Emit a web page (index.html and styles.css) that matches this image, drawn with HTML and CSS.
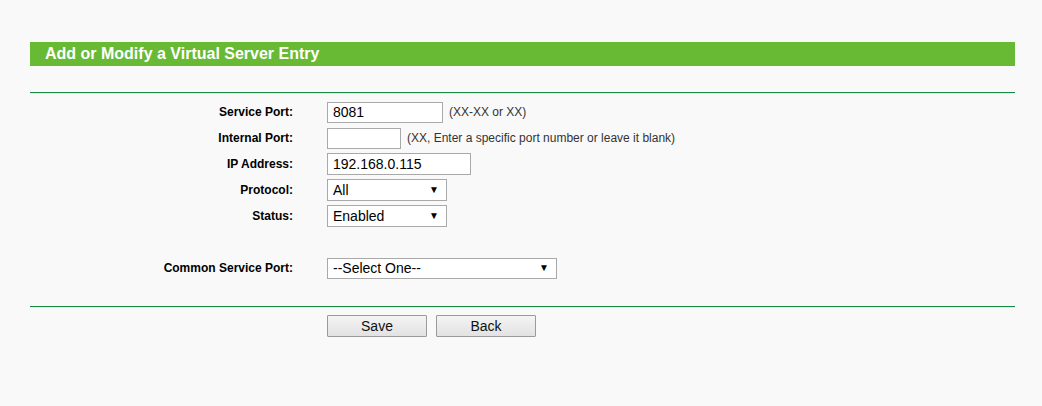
FILE: index.html
```html
<!DOCTYPE html>
<html lang="en">
<head>
  <meta charset="UTF-8">
  <title>Virtual Servers</title>
  <link rel="stylesheet" href="styles.css">
</head>
<body>

  <div class="page">
    <div class="title-bar">Add or Modify a Virtual Server Entry</div>
    <div class="rule"></div>

    <div class="form-grid">
      <label for="ex-port">Service Port:</label>
      <div class="field">
        <input type="text" id="ex-port" class="w-port" value="8081">
        <span class="hint">(XX-XX or XX)</span>
      </div>

      <label for="in-port">Internal Port:</label>
      <div class="field">
        <input type="text" id="in-port" class="w-short">
        <span class="hint">(XX, Enter a specific port number or leave it blank)</span>
      </div>

      <label for="ip">IP Address:</label>
      <div class="field">
        <input type="text" id="ip" class="w-ip tall" value="192.168.0.115">
      </div>

      <label for="protocol">Protocol:</label>
      <div class="field">
        <div class="select-box w-select">
          <select id="protocol">
            <option>All</option>
            <option>TCP</option>
            <option>UDP</option>
          </select>
          <span class="arrow">&#9660;</span>
        </div>
      </div>

      <label for="status">Status:</label>
      <div class="field">
        <div class="select-box w-select">
          <select id="status">
            <option>Enabled</option>
            <option>Disabled</option>
          </select>
          <span class="arrow">&#9660;</span>
        </div>
      </div>

      <div class="spacer"></div>

      <label for="common">Common Service Port:</label>
      <div class="field">
        <div class="select-box w-common short">
          <select id="common">
            <option>--Select One--</option>
            <option>DNS</option>
            <option>FTP</option>
            <option>HTTP</option>
          </select>
          <span class="arrow">&#9660;</span>
        </div>
      </div>
    </div>

    <div class="rule bottom"></div>

    <div class="actions">
      <button type="button">Save</button>
      <button type="button">Back</button>
    </div>
  </div>

</body>
</html>
```

FILE: styles.css
```css
body {
  margin: 0;
  background-color: #f9f9f9;
  font-family: "Liberation Sans", Arial, sans-serif;
  color: #000;
}

.page {
  width: 985px;
  margin-left: 30px;
  padding-top: 42px;
}

/* green header strip */
.title-bar {
  height: 24px;
  line-height: 24px;
  padding-left: 15px;
  background-color: #68b934;
  color: #fff;
  font-size: 16px;
  font-weight: bold;
}

.rule {
  margin-top: 26px;
  border-top: 1px solid #168a44;
  border-bottom: 1px solid #dcefe1;
}

.rule.bottom {
  margin-top: 25px;
}

.form-grid {
  display: grid;
  grid-template-columns: 263px 1fr;
  grid-auto-rows: 26px;
  column-gap: 34px;
  align-items: center;
  padding-top: 5px;
}

.form-grid label {
  text-align: right;
  font-size: 12px;
  font-weight: bold;
  color: #000;
}

.spacer {
  grid-column: 1 / 3;
}

.field {
  display: flex;
  align-items: center;
  gap: 6px;
}

.hint {
  font-size: 12px;
  color: #333;
}

input {
  box-sizing: border-box;
  height: 21px;
  margin: 0;
  padding: 0 5px;
  border: 1px solid #a9a9a9;
  background: #fff;
  font-family: inherit;
  font-size: 14px;
  color: #000;
}

input.tall {
  height: 22px;
}

.w-port { width: 116px; }
.w-short { width: 74px; }
.w-ip { width: 144px; }
.w-select { width: 120px; }
.w-common { width: 230px; }

/* dropdowns with the small black arrow */
.select-box {
  position: relative;
  height: 22px;
}

.select-box.short {
  height: 21px;
}

.select-box select {
  box-sizing: border-box;
  width: 100%;
  height: 100%;
  margin: 0;
  padding: 0 20px 0 5px;
  border: 1px solid #a9a9a9;
  border-radius: 0;
  background: #fff;
  appearance: none;
  -webkit-appearance: none;
  font-family: inherit;
  font-size: 14px;
  color: #000;
}

.select-box .arrow {
  position: absolute;
  right: 8px;
  top: 50%;
  transform: translateY(-50%);
  font-size: 10px;
  line-height: 10px;
  pointer-events: none;
}

.actions {
  display: flex;
  gap: 9px;
  padding-left: 297px;
  padding-top: 7px;
}

button {
  box-sizing: border-box;
  width: 100px;
  height: 22px;
  padding: 0;
  border: 1px solid #9a9a9a;
  border-radius: 1px;
  background: linear-gradient(#f4f4f4, #e2e2e2);
  font-family: inherit;
  font-size: 14px;
  color: #111;
  cursor: pointer;
}
```
